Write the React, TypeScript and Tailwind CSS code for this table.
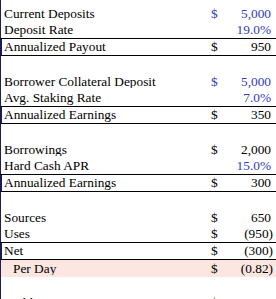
import React from "react";

type Row = {
  label?: string;
  dollar?: boolean;
  value?: string;
  blue?: boolean;
  blueDollar?: boolean;
  border?: boolean;
  thick?: boolean;
  indent?: boolean;
  pink?: boolean;
  paren?: boolean;
};

const rows: Row[] = [
  { label: "Current Deposits", dollar: true, value: "5,000", blue: true, blueDollar: true },
  { label: "Deposit Rate", value: "19.0%", blue: true, border: true },
  { label: "Annualized Payout", dollar: true, value: "950", border: true, thick: true },
  {},
  { label: "Borrower Collateral Deposit", dollar: true, value: "5,000", blue: true, blueDollar: true },
  { label: "Avg. Staking Rate", value: "7.0%", blue: true, border: true },
  { label: "Annualized Earnings", dollar: true, value: "350", border: true, thick: true },
  {},
  { label: "Borrowings", dollar: true, value: "2,000" },
  { label: "Hard Cash APR", value: "15.0%", blue: true, border: true },
  { label: "Annualized Earnings", dollar: true, value: "300", border: true, thick: true },
  {},
  { label: "Sources", dollar: true, value: "650" },
  { label: "Uses", dollar: true, value: "(950)", paren: true, border: true },
  { label: "Net", dollar: true, value: "(300)", paren: true, border: true, thick: true },
  { label: "Per Day", dollar: true, value: "(0.82)", paren: true, indent: true, pink: true },
  {},
  { label: "Yield Farming", dollar: true, value: "65" },
];

export default function App() {
  return (
    <div
      className="w-[276px] h-[299px] overflow-hidden bg-white text-black text-[13.33px] leading-none"
      style={{ fontFamily: '"Liberation Serif", "Times New Roman", serif' }}
    >
      <div className="h-[5px] border-l border-[#1e1e5c]" />
      {rows.map((r, i) => (
        <div
          key={i}
          className={
            "flex h-[17px] items-center " +
            (r.thick ? "border-l-2 border-l-[#1a1a58] " : "border-l border-l-[#1e1e5c] ") +
            (r.border ? "border-b border-b-black " : "") +
            (r.pink ? "bg-[#fbe6e0] " : "")
          }
        >
          <div
            className={
              "flex-1 whitespace-nowrap overflow-hidden " +
              (r.indent ? "pl-[12px] " : r.thick ? "pl-[2px] " : "pl-[3px]")
            }
          >
            {r.label}
          </div>
          <div className={"w-[25px] " + (r.blueDollar ? "text-[#2f3bc4]" : "")}>
            {r.dollar ? "$" : ""}
          </div>
          <div
            className={
              "w-[40px] text-right whitespace-nowrap " +
              (r.paren ? "pr-[3px] " : "pr-[5px] ") +
              (r.blue ? "text-[#2f3bc4]" : "")
            }
          >
            {r.value}
          </div>
        </div>
      ))}
    </div>
  );
}
